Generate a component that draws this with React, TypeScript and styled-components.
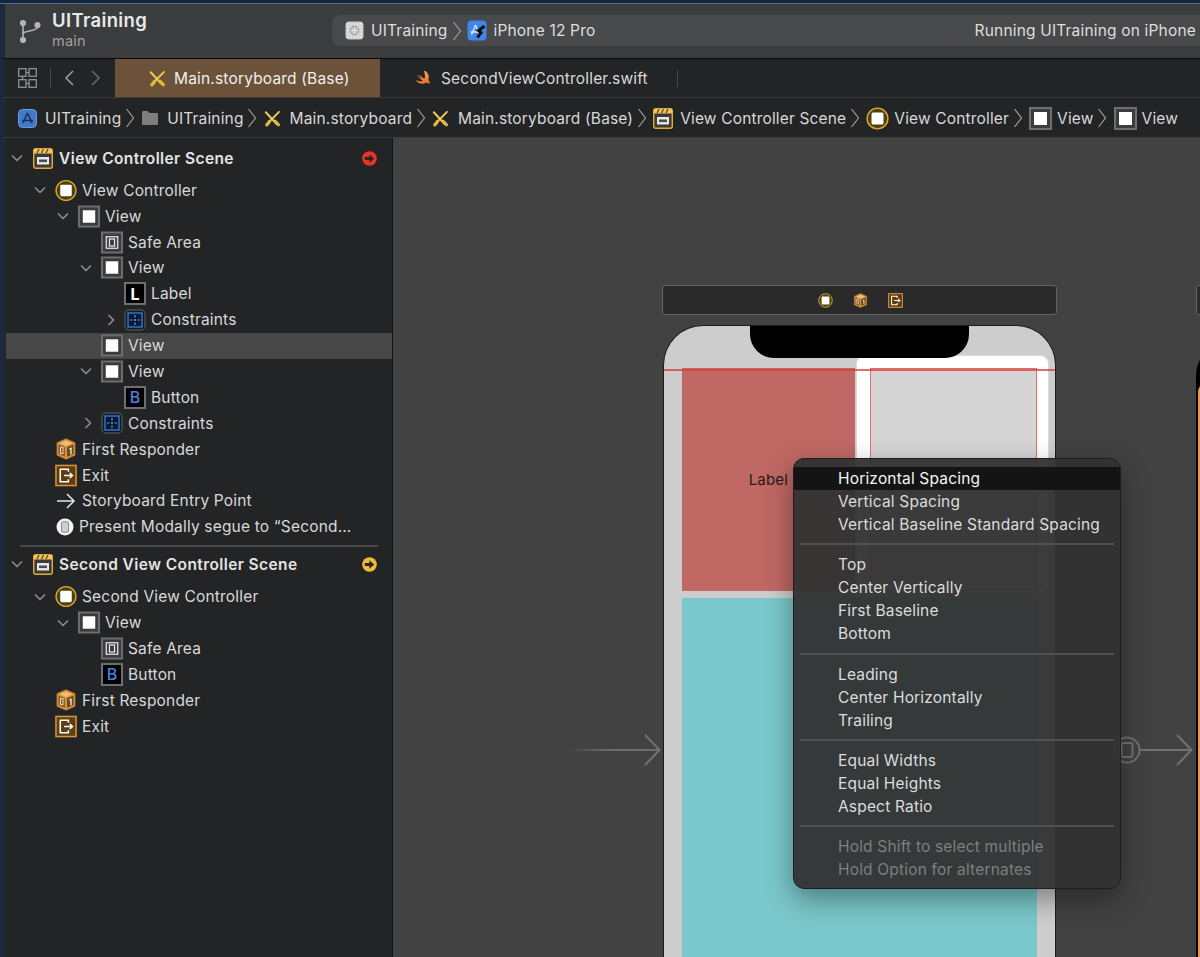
import React from "react";
import styled, { createGlobalStyle } from "styled-components";

const Global = createGlobalStyle`
  html, body { margin: 0; padding: 0; background: #232426; overflow: hidden; }
  #root { width: 1200px; height: 957px; }
  * { box-sizing: border-box; }
`;

const Page = styled.div`
  width: 1200px; height: 957px; overflow: hidden; display: flex; flex-direction: column;
  font-family: Inter, "Noto Sans", sans-serif; font-size: 15.5px; letter-spacing: .18px; color: #dcdcdc; background: #232426;
`;
const TopEdge = styled.div`height: 4px; flex: none; background: #12264a; border-bottom: 1px solid #6a6a6a;`;
const Toolbar = styled.header`
  height: 55px; flex: none; display: flex; align-items: center; background: #3b3c3e;
  border-bottom: 1px solid #0b0b0b; border-left: 5px solid #1b2a3d; padding-left: 13px;
`;
const BranchSlot = styled.div`width: 34px; display: flex; flex: none;`;
const Project = styled.div`width: 280px; flex: none; display: flex; flex-direction: column; margin-top: -5px;`;
const ProjectName = styled.div`font-size: 18.5px; font-weight: 600; letter-spacing: .35px; color: #e8e8e8; line-height: 22px; margin-top: 1px;`;
const BranchName = styled.div`font-size: 14.5px; color: #a0a0a0; line-height: 19px;`;
const Scheme = styled.div`
  flex: 1; height: 31px; margin-top: -1px; background: #48494b; border-radius: 8px 0 0 8px;
  display: flex; align-items: center; padding-left: 12px; padding-right: 4px; gap: 4px; color: #dedede;
`;
const SchemeIcon = styled.div`display: flex; margin: 0 3px 0 1px;`;
const Status = styled.div`margin-left: auto; white-space: nowrap;`;
const Tabs = styled.nav`
  height: 39px; flex: none; display: flex; align-items: center; background: #232426;
  border-bottom: 1px solid #3a3b3d; border-left: 5px solid #1b2a3d;
`;
const NavTools = styled.div`width: 110px; flex: none; display: flex; align-items: center; padding-left: 13px;`;
const ToolSep = styled.div`width: 1px; height: 20px; background: #48494b; margin: 0 12px 0 13px;`;
const NavGap = styled.div`width: 15px; flex: none;`;
const ActiveTab = styled.div`
  width: 265px; height: 100%; flex: none; background: #6b5239; color: #f0f0f0;
  display: flex; align-items: center; padding-left: 34px; gap: 8px;
`;
const PlainTab = styled.div`
  height: 100%; flex: none; display: flex; align-items: center; padding-left: 35px; gap: 8px;
  color: #d8d8d8;
  &::after { content: ""; width: 1px; height: 17px; background: #48494b; margin-left: 21px; }
  & > svg { flex: none; }
`;
const Crumbs = styled.div`
  height: 40px; flex: none; display: flex; align-items: center; background: #232426; padding-top: 1px; letter-spacing: .16px;
  border-bottom: 1px solid #3a3b3d; border-left: 5px solid #1b2a3d; padding-left: 13px; white-space: nowrap; color: #d8d8d8;
`;
const Crumb = styled.div<{ $gap: number }>`display: flex; align-items: center; gap: ${p => p.$gap}px;`;
const CrumbSep = styled.div`display: flex; width: 20px; justify-content: center; flex: none; padding-right: 3px;`;
const Main = styled.div`flex: 1; min-height: 0; display: flex;`;
const EdgeStrip = styled.div`width: 5px; flex: none; background: #1b2a3d;`;
const Sidebar = styled.aside`
  width: 388px; flex: none; background: #232426; border-right: 1px solid #141414; padding: 7px 0 0 1px; color: #d8d8d8;
`;
const SceneRow = styled.div`
  height: 26px; margin-bottom: 6.3px; display: flex; align-items: center; padding: 0 15px 0 4px; font-weight: 600; letter-spacing: .4px; color: #e4e4e4;
`;
const Row = styled.div<{ $depth: number; $selected?: boolean }>`
  height: 25.9px; display: flex; align-items: center; padding-left: ${p => 27 + (p.$depth - 1) * 23}px;
  background: ${p => (p.$selected ? "#474747" : "transparent")};
`;
const ChevSlot = styled.div<{ $closed?: boolean }>`
  width: 22px; flex: none; display: flex; justify-content: center; padding-right: ${p => (p.$closed ? 4 : 8)}px;
`;
const SceneChev = styled(ChevSlot)`width: 23px; padding-right: 9px;`;
const IconSlot = styled.div<{ $w?: number }>`
  width: ${p => p.$w ?? 22}px; height: 22px; flex: none; display: flex; align-items: center; justify-content: center; margin-right: 5px;
`;
const SceneIconSlot = styled(IconSlot)`margin-right: 6px;`;
const Status2 = styled.div`margin-left: auto; display: flex;`;
const Divider = styled.div`height: 2px; background: #48494a; margin: 5.7px 14px 4px 14px;`;
const Canvas = styled.section`flex: 1; min-width: 0; position: relative; background: #424242; overflow: hidden;`;

const Dock = styled.div<{ $left: number }>`
  position: absolute; left: ${p => p.$left}px; top: 147px; width: 395px; height: 30px; background: #2a2a2a;
  border: 1px solid #646464; border-radius: 3px; display: flex; align-items: center; padding-left: 155px; gap: 20px;
`;
const Phone = styled.div`
  position: absolute; left: 270px; top: 187px; width: 393px; height: 690px; background: #cdcdcd;
  border: 1px solid #1c1c1c; border-bottom: 0; border-radius: 40px 40px 0 0; overflow: hidden;
`;
const Notch = styled.div`position: absolute; left: 86px; top: -1px; width: 219px; height: 33px; background: #000; border-radius: 0 0 24px 24px;`;
const RedView = styled.div`
  position: absolute; left: 18px; top: 42px; width: 173px; height: 223px; background: #bf6864;
  display: flex; align-items: center; justify-content: flex-end; padding: 0 67px 0 0; color: #2a1a1a; font-size: 15px;
`;
const TealView = styled.div`position: absolute; left: 18px; top: 272px; width: 355px; height: 420px; background: #7ac8cb;`;
const SelectionHalo = styled.div`
  position: absolute; left: 193px; top: 30px; width: 191px; height: 236px; background: #fff; border-radius: 8px; box-shadow: 0 0 2px #fff;
`;
const GrayView = styled.div`
  position: absolute; left: 206px; top: 42px; width: 167px; height: 223px; background: #d5d5d5; border: 1.5px solid #ea6a66;
`;
const SafeLine = styled.div`position: absolute; left: 0; right: 0; top: 43px; height: 2px; background: rgba(214, 60, 58, .75);`;
const NextDock = styled.div`
  position: absolute; left: 803px; top: 147px; width: 40px; height: 30px; background: #2a2a2a; border: 1px solid #646464; border-radius: 3px;
`;
const NextPhone = styled.div`
  position: absolute; left: 803px; top: 207px; width: 60px; height: 700px; background: #000; border-radius: 30px 0 0 0; overflow: hidden;
`;
const NextOrange = styled.div`position: absolute; left: 2px; top: 40px; width: 60px; height: 680px; background: #e89a3c; border-radius: 6px 0 0 0;`;
const CanvasArt = styled.svg<{ $left: number; $top: number }>`position: absolute; left: ${p => p.$left}px; top: ${p => p.$top}px;`;

const Menu = styled.div`
  position: absolute; left: 400px; top: 320px; width: 328px; height: 431px; padding: 8px 0; border-radius: 11px;
  background: rgba(50, 50, 50, .95); border: 1px solid #1e1e1e; box-shadow: 0 10px 28px rgba(0, 0, 0, .38);
  color: #dcdcdc; overflow: hidden;
`;
const MenuItem = styled.div<{ $active?: boolean; $muted?: boolean }>`
  height: 23px; display: flex; align-items: center; padding-left: 44px; white-space: nowrap;
  background: ${p => (p.$active ? "#141414" : "transparent")};
  color: ${p => (p.$active ? "#f4f4f4" : p.$muted ? "#7f7f7f" : "#dcdcdc")};
`;
const MenuSep = styled.div`height: 2px; margin: 7.3px 6px 8px 6px; background: #505050;`;

/* ---------- icons ---------- */
const Chevron = ({ open, color = "#8a8a8a" }: { open?: boolean; color?: string }) => (
  <svg width="14" height="14" viewBox="0 0 14 14" fill="none" stroke={color} strokeWidth="1.7" strokeLinecap="round" strokeLinejoin="round">
    {open ? <path d="M2.5 5l4.5 4.500L11.500 5" /> : <path d="M5 2.500L9.500 7 5 11.500" />}
  </svg>
);
const PathChevron = () => (
  <svg width="10" height="22" viewBox="0 0 10 22" fill="none" stroke="#a0a0a0" strokeWidth="1.2"><path d="M1.500 2l7 9-7 9" /></svg>
);
const ViewIcon = ({ safe }: { safe?: boolean }) => (
  <svg width="23" height="23" viewBox="0 0 23 23">
    <rect x="1" y="1" width="21" height="21" fill="#3c3c3e" stroke="#6f6f6f" strokeWidth="2" />
    {safe ? (
      <>
        <rect x="5.500" y="5.500" width="12" height="12" fill="none" stroke="#e8e8e8" strokeWidth="1.3" />
        <rect x="8.800" y="7.800" width="5.400" height="7.400" fill="none" stroke="#e8e8e8" strokeWidth="1.3" />
      </>
    ) : (
      <rect x="5" y="5" width="13" height="13" fill="#fff" />
    )}
  </svg>
);
const VcIcon = ({ size = 23 }: { size?: number }) => (
  <svg width={size} height={size} viewBox="0 0 23 23">
    <circle cx="11.500" cy="11.500" r="10.400" fill="#4b4210" stroke="#e0a72e" strokeWidth="1.4" />
    <rect x="5.500" y="5.500" width="12" height="12" rx="1.500" fill="#fff" />
  </svg>
);
const SceneIcon = () => (
  <svg width="20" height="21" viewBox="0 0 20 21">
    <rect x=".7" y=".7" width="18.600" height="19.600" rx="2" fill="#3a3a38" stroke="#e3ab3a" strokeWidth="1.4" />
    <rect x="1" y="1" width="18" height="4.500" fill="#f0c560" />
    <path d="M4 5l2-4M8.500 5l2-4M13 5l2-4" stroke="#5a4a20" strokeWidth="1.3" />
    <rect x="4" y="9" width="12" height="7.500" fill="#e8e8e8" />
    <rect x="6" y="11.500" width="8" height="2.600" fill="#4a4a48" />
  </svg>
);
const GlyphBox = styled.div<{ $blue?: boolean }>`
  width: 23px; height: 23px; background: #000; border: 2px solid #6f6f6f; display: flex; align-items: center; justify-content: center;
  font-size: 16px; line-height: 1; font-weight: ${p => (p.$blue ? 500 : 700)}; color: ${p => (p.$blue ? "#4a7fe0" : "#fff")};
`;
const ConstraintIcon = () => (
  <svg width="22" height="22" viewBox="0 0 22 22">
    <rect x="1" y="1" width="20" height="20" rx="4" fill="#17181a" stroke="#4a4b4d" strokeWidth="1.5" />
    <rect x="4" y="4" width="14" height="14" fill="#0c1a30" stroke="#2f78e0" strokeWidth="1.4" />
    <path d="M11 6v2.500M11 10v2M11 13.500V16M6 11h2.500M10 11h2M13.500 11H16" stroke="#5a9cf0" strokeWidth="1.2" />
  </svg>
);
const CubeIcon = ({ size = 22 }: { size?: number }) => (
  <svg width={size} height={size} viewBox="0 0 22 22">
    <path d="M11 .8l9 4v12.400l-9 4-9-4V4.800z" fill="#d8923a" stroke="#c47f2a" strokeWidth=".8" />
    <path d="M11 2.500l6.500 2.700-6.500 2.800-6.500-2.800z" fill="#f0bc78" />
    <path d="M3.500 6.500l6.500 2.800v9.500l-6.500-2.800z" fill="#8a6030" />
    <path d="M12 9.300l6.500-2.800v9.500L12 18.800z" fill="#6b4a20" />
    <rect x="5.500" y="9.500" width="2.500" height="6" fill="none" stroke="#e8d0a8" strokeWidth="1" />
    <path d="M14.500 11l1.500-.8v6" fill="none" stroke="#fff" strokeWidth="1.200" />
  </svg>
);
const ExitIcon = ({ size = 23 }: { size?: number }) => (
  <svg width={size} height={size} viewBox="0 0 23 23" fill="none">
    <rect x="1" y="1" width="21" height="21" fill="#5e3d12" stroke="#d8943a" strokeWidth="1.6" />
    <path d="M14 7.500V5H5.500v13H14v-2.500" stroke="#fff" strokeWidth="1.600" />
    <path d="M9.500 11.500h8.500M15.500 9l2.700 2.500-2.700 2.500" stroke="#fff" strokeWidth="1.600" />
  </svg>
);
const EntryArrow = () => (
  <svg width="20" height="18" viewBox="0 0 20 18" fill="none" stroke="#e4e4e4" strokeWidth="1.5"><path d="M1 9h17M11 2l7 7-7 7" /></svg>
);
const SegueIcon = () => (
  <svg width="18" height="18" viewBox="0 0 18 18">
    <circle cx="9" cy="9" r="8.500" fill="#f4f4f4" />
    <rect x="5.500" y="3.800" width="7" height="10.400" rx="1.200" fill="#d0d0d0" stroke="#8a8a8a" />
  </svg>
);
const ArrowBadge = ({ color }: { color: string }) => (
  <svg width="15" height="15" viewBox="0 0 15 15">
    <circle cx="7.500" cy="7.500" r="7.300" fill={color} />
    <path d="M2.800 5.900h4.600V3.200l4.800 4.300-4.800 4.300V9.100H2.800z" fill="#2a2420" />
  </svg>
);
const BranchIcon = () => (
  <svg width="24" height="24" viewBox="0 0 24 24" fill="none" stroke="#b4b4b4" strokeWidth="1.600">
    <circle cx="5" cy="4" r="2.300" fill="#b4b4b4" />
    <circle cx="5" cy="21" r="2.300" fill="#b4b4b4" />
    <circle cx="19.500" cy="6" r="2.300" fill="#b4b4b4" />
    <path d="M5 6v13M5 15c0-4 14-2 14.500-7" />
  </svg>
);
const GridIcon = () => (
  <svg width="19" height="20" viewBox="0 0 19 20" fill="none" stroke="#9a9a9a" strokeWidth="1.200">
    <rect x=".7" y=".7" width="7.300" height="7.600" /><rect x="11" y=".7" width="7.300" height="7.600" />
    <rect x=".7" y="11.700" width="7.300" height="7.600" /><rect x="11" y="11.700" width="7.300" height="7.600" />
    <path d="M8 4.500h3M4.500 8.300v3.400M8 15.500h3" />
  </svg>
);
const NavArrow = ({ dir, color }: { dir: "l" | "r"; color: string }) => (
  <svg width="12" height="18" viewBox="0 0 12 18" fill="none" stroke={color} strokeWidth="1.500">
    <path d={dir === "l" ? "M10 2L3 9l7 7" : "M2 2l7 7-7 7"} />
  </svg>
);
const StoryboardIcon = () => (
  <svg width="17" height="17" viewBox="0 0 17 17" fill="none" strokeLinecap="round">
    <path d="M1.800 2.200l11 12" stroke="#ecca58" strokeWidth="2" />
    <path d="M11 11l3.500 3.800" stroke="#e3b93c" strokeWidth="3" />
    <path d="M15 1.800L6 11" stroke="#ecca58" strokeWidth="1.800" />
    <path d="M5.500 11.500L3 14.800" stroke="#e3b93c" strokeWidth="3.400" />
  </svg>
);
const SwiftBird = () => (
  <svg width="18" height="18" viewBox="0 0 24 24">
    <defs>
      <linearGradient id="swiftFill" x1="0" y1="0" x2="0" y2="1">
        <stop offset="0" stopColor="#f6a04a" />
        <stop offset="1" stopColor="#e8702c" />
      </linearGradient>
    </defs>
    <path
      d="M13.900 2.500c3.500 2.400 5.400 6.600 4.300 10.600-.1.400-.2.700-.4 1.100 1.600 2 2.500 4.400 2 6-.1-.1-1.500-2-4-1.800-2 .2-3.400 1.400-6.400 1.400-3.800 0-6.900-2.200-8.400-5.400 2.600 1.800 6 2.800 9.400 1.400-3-2.200-6-5.300-8.300-8.300 2 1.800 5.100 4.100 7 5.300-1.700-1.800-3.300-4-4.500-6.100 2.400 2.300 5.200 4.700 7.900 6.400.2-.5.400-1 .5-1.600.7-3.100-.2-6.200-1.100-9z"
      fill="url(#swiftFill)"
    />
  </svg>
);
const FolderIcon = () => (
  <svg width="18" height="16" viewBox="0 0 18 16"><path d="M1 2.500C1 1.700 1.700 1 2.500 1h4l2 2H16c.6 0 1 .4 1 1v10c0 .6-.4 1-1 1H2c-.6 0-1-.4-1-1z" fill="#7e7e7e" /></svg>
);
const AppIcon = () => (
  <svg width="19" height="19" viewBox="0 0 19 19" fill="none">
    <rect x=".5" y=".5" width="18" height="18" rx="4" fill="#4379c8" stroke="#6a9ae0" />
    <path d="M9.500 4L5 14M9.500 4L14 14M4 11.500h11" stroke="#16305a" strokeWidth="1.500" />
  </svg>
);
const DeviceAppIcon = () => (
  <svg width="20" height="21" viewBox="0 0 20 21" fill="none">
    <rect x=".5" y=".5" width="19" height="20" rx="4" fill="#3f86e8" />
    <path d="M8.500 5L4.500 15M8.500 5L12.500 15M3.500 12h10" stroke="#dfeaff" strokeWidth="1.300" />
    <path d="M17.500 6l-6 4.500 2.500 2-3.500 5" stroke="#0c0c0c" strokeWidth="3" />
  </svg>
);
const TargetIcon = () => (
  <svg width="19" height="19" viewBox="0 0 19 19" fill="none">
    <rect x=".5" y=".5" width="18" height="18" rx="4" fill="#c9c9c9" />
    <path d="M3 1v17M6 1v17M9.500 1v17M13 1v17M16 1v17M1 3h17M1 6h17M1 9.500h17M1 13h17M1 16h17" stroke="#e6e6e6" strokeWidth=".8" />
    <circle cx="9.500" cy="9.500" r="4" stroke="#a2a2a2" strokeWidth="1.300" />
  </svg>
);

/* ---------- data ---------- */
type Kind = "vc" | "view" | "safe" | "label" | "button" | "constraint" | "cube" | "exit" | "entry" | "segue";
const iconFor: Record<Kind, React.ReactNode> = {
  vc: <VcIcon />, view: <ViewIcon />, safe: <ViewIcon safe />, label: <GlyphBox>L</GlyphBox>, button: <GlyphBox $blue>B</GlyphBox>,
  constraint: <ConstraintIcon />, cube: <CubeIcon />, exit: <ExitIcon />, entry: <EntryArrow />, segue: <SegueIcon />,
};
type Node = { d: number; k: Kind; t: string; c?: "open" | "closed"; sel?: boolean; w?: number };
const scene1: Node[] = [
  { d: 1, k: "vc", t: "View Controller", c: "open" },
  { d: 2, k: "view", t: "View", c: "open" },
  { d: 3, k: "safe", t: "Safe Area" },
  { d: 3, k: "view", t: "View", c: "open" },
  { d: 4, k: "label", t: "Label" },
  { d: 4, k: "constraint", t: "Constraints", c: "closed" },
  { d: 3, k: "view", t: "View", sel: true },
  { d: 3, k: "view", t: "View", c: "open" },
  { d: 4, k: "button", t: "Button" },
  { d: 3, k: "constraint", t: "Constraints", c: "closed" },
  { d: 1, k: "cube", t: "First Responder" },
  { d: 1, k: "exit", t: "Exit" },
  { d: 1, k: "entry", t: "Storyboard Entry Point" },
  { d: 1, k: "segue", t: "Present Modally segue to “Second…", w: 19 },
];
const scene2: Node[] = [
  { d: 1, k: "vc", t: "Second View Controller", c: "open" },
  { d: 2, k: "view", t: "View", c: "open" },
  { d: 3, k: "safe", t: "Safe Area" },
  { d: 3, k: "button", t: "Button" },
  { d: 1, k: "cube", t: "First Responder" },
  { d: 1, k: "exit", t: "Exit" },
];
const menuGroups: { t: string; active?: boolean; muted?: boolean }[][] = [
  [{ t: "Horizontal Spacing", active: true }, { t: "Vertical Spacing" }, { t: "Vertical Baseline Standard Spacing" }],
  [{ t: "Top" }, { t: "Center Vertically" }, { t: "First Baseline" }, { t: "Bottom" }],
  [{ t: "Leading" }, { t: "Center Horizontally" }, { t: "Trailing" }],
  [{ t: "Equal Widths" }, { t: "Equal Heights" }, { t: "Aspect Ratio" }],
  [{ t: "Hold Shift to select multiple", muted: true }, { t: "Hold Option for alternates", muted: true }],
];
const crumbs: { icon: React.ReactNode; t: string; gap: number }[] = [
  { icon: <AppIcon />, t: "UITraining", gap: 8 },
  { icon: <FolderIcon />, t: "UITraining", gap: 8 },
  { icon: <StoryboardIcon />, t: "Main.storyboard", gap: 9 },
  { icon: <StoryboardIcon />, t: "Main.storyboard (Base)", gap: 9 },
  { icon: <SceneIcon />, t: "View Controller Scene", gap: 7 },
  { icon: <VcIcon />, t: "View Controller", gap: 5 },
  { icon: <ViewIcon />, t: "View", gap: 5 },
  { icon: <ViewIcon />, t: "View", gap: 5 },
];

const Tree = ({ nodes }: { nodes: Node[] }) => (
  <>
    {nodes.map((n, i) => (
      <Row key={i} $depth={n.d} $selected={n.sel}>
        <ChevSlot $closed={n.c === "closed"}>{n.c && <Chevron open={n.c === "open"} />}</ChevSlot>
        <IconSlot $w={n.w}>{iconFor[n.k]}</IconSlot>
        {n.t}
      </Row>
    ))}
  </>
);

export default function App() {
  return (
    <Page>
      <Global />
      <TopEdge />
      <Toolbar>
        <BranchSlot><BranchIcon /></BranchSlot>
        <Project>
          <ProjectName>UITraining</ProjectName>
          <BranchName>main</BranchName>
        </Project>
        <Scheme>
          <SchemeIcon><TargetIcon /></SchemeIcon>
          UITraining
          <PathChevron />
          <SchemeIcon><DeviceAppIcon /></SchemeIcon>
          iPhone 12 Pro
          <Status>Running UITraining on iPhone</Status>
        </Scheme>
      </Toolbar>
      <Tabs>
        <NavTools>
          <GridIcon />
          <ToolSep />
          <NavArrow dir="l" color="#a0a0a0" />
          <NavGap />
          <NavArrow dir="r" color="#6a6a6a" />
        </NavTools>
        <ActiveTab><StoryboardIcon />Main.storyboard (Base)</ActiveTab>
        <PlainTab><SwiftBird />SecondViewController.swift</PlainTab>
      </Tabs>
      <Crumbs>
        {crumbs.map((c, i) => (
          <React.Fragment key={i}>
            {i > 0 && <CrumbSep><PathChevron /></CrumbSep>}
            <Crumb $gap={c.gap}>{c.icon}{c.t}</Crumb>
          </React.Fragment>
        ))}
      </Crumbs>
      <Main>
        <EdgeStrip />
        <Sidebar>
          <SceneRow>
            <SceneChev><Chevron open /></SceneChev>
            <SceneIconSlot $w={20}><SceneIcon /></SceneIconSlot>
            View Controller Scene
            <Status2><ArrowBadge color="#e8352c" /></Status2>
          </SceneRow>
          <Tree nodes={scene1} />
          <Divider />
          <SceneRow>
            <SceneChev><Chevron open /></SceneChev>
            <SceneIconSlot $w={20}><SceneIcon /></SceneIconSlot>
            Second View Controller Scene
            <Status2><ArrowBadge color="#f0bc3a" /></Status2>
          </SceneRow>
          <Tree nodes={scene2} />
        </Sidebar>
        <Canvas>
          <Dock $left={269}>
            <VcIcon size={15} />
            <CubeIcon size={15} />
            <ExitIcon size={15} />
          </Dock>
          <NextDock />
          <NextPhone><NextOrange /></NextPhone>
          <Phone>
            <RedView>Label</RedView>
            <TealView />
            <SelectionHalo />
            <GrayView />
            <SafeLine />
            <Notch />
          </Phone>
          <CanvasArt $left={170} $top={594} width={100} height={36} viewBox="0 0 100 36" fill="none">
            <defs>
              <linearGradient id="fade" x1="0" x2="1" y1="0" y2="0">
                <stop offset="0" stopColor="#6e6e6e" stopOpacity="0" />
                <stop offset=".5" stopColor="#6e6e6e" />
              </linearGradient>
            </defs>
            <rect x="4" y="17" width="92" height="2" fill="url(#fade)" />
            <path d="M82 3l14.500 15L82 33" stroke="#727272" strokeWidth="2" />
          </CanvasArt>
          <CanvasArt $left={718} $top={594} width={84} height={36} viewBox="0 0 84 36" fill="none" stroke="#727272" strokeWidth="2">
            <circle cx="16" cy="18" r="12.500" />
            <rect x="10.500" y="11" width="11" height="14" rx="1" />
            <path d="M29 18h51M66 3l14.500 15L66 33" />
          </CanvasArt>
          <Menu>
            {menuGroups.map((g, i) => (
              <React.Fragment key={i}>
                {i > 0 && <MenuSep />}
                {g.map(m => (
                  <MenuItem key={m.t} $active={m.active} $muted={m.muted}>{m.t}</MenuItem>
                ))}
              </React.Fragment>
            ))}
          </Menu>
        </Canvas>
      </Main>
    </Page>
  );
}
